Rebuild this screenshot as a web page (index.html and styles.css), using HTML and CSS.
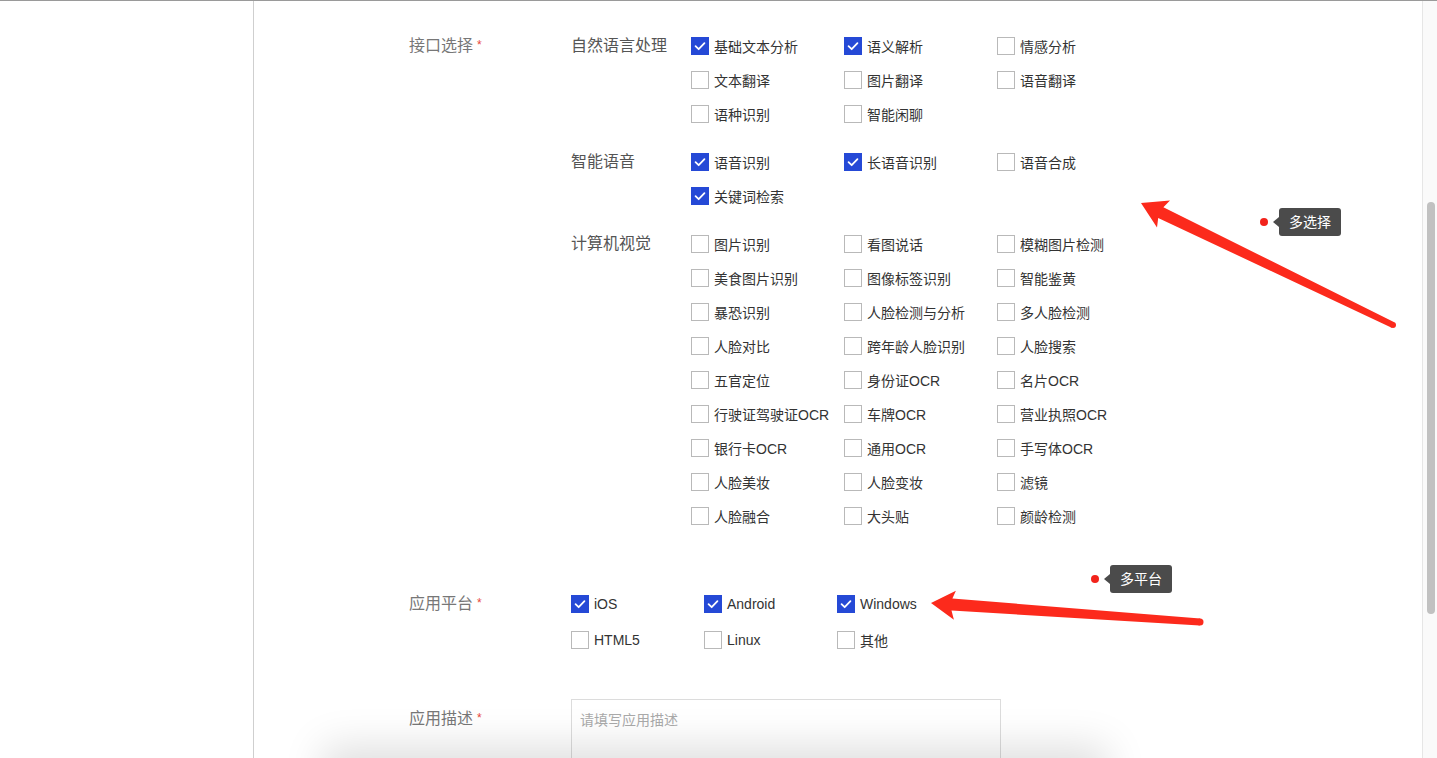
FILE: index.html
```html
<!DOCTYPE html>
<html lang="zh-CN">
<head>
<meta charset="utf-8">
<title>应用创建</title>
<link rel="stylesheet" href="styles.css">
</head>
<body>
<div class="frame">
  <div class="leftspace"></div>
  <main class="panel">
    <div class="field">
      <div class="field-label">接口选择<span class="star">*</span></div>
      <div class="field-body">
        <div class="cat">
          <div class="cat-name">自然语言处理</div>
          <div class="opts">
            <label class="opt"><span class="box on"><svg viewBox="0 0 18 18"><path d="M4 9.2 L7.5 12.6 L14 5.8"/></svg></span>基础文本分析</label>
            <label class="opt"><span class="box on"><svg viewBox="0 0 18 18"><path d="M4 9.2 L7.5 12.6 L14 5.8"/></svg></span>语义解析</label>
            <label class="opt"><span class="box"></span>情感分析</label>
            <label class="opt"><span class="box"></span>文本翻译</label>
            <label class="opt"><span class="box"></span>图片翻译</label>
            <label class="opt"><span class="box"></span>语音翻译</label>
            <label class="opt"><span class="box"></span>语种识别</label>
            <label class="opt"><span class="box"></span>智能闲聊</label>
          </div>
        </div>
        <div class="cat">
          <div class="cat-name">智能语音</div>
          <div class="opts">
            <label class="opt"><span class="box on"><svg viewBox="0 0 18 18"><path d="M4 9.2 L7.5 12.6 L14 5.8"/></svg></span>语音识别</label>
            <label class="opt"><span class="box on"><svg viewBox="0 0 18 18"><path d="M4 9.2 L7.5 12.6 L14 5.8"/></svg></span>长语音识别</label>
            <label class="opt"><span class="box"></span>语音合成</label>
            <label class="opt"><span class="box on"><svg viewBox="0 0 18 18"><path d="M4 9.2 L7.5 12.6 L14 5.8"/></svg></span>关键词检索</label>
          </div>
        </div>
        <div class="cat">
          <div class="cat-name">计算机视觉</div>
          <div class="opts">
            <label class="opt"><span class="box"></span>图片识别</label>
            <label class="opt"><span class="box"></span>看图说话</label>
            <label class="opt"><span class="box"></span>模糊图片检测</label>
            <label class="opt"><span class="box"></span>美食图片识别</label>
            <label class="opt"><span class="box"></span>图像标签识别</label>
            <label class="opt"><span class="box"></span>智能鉴黄</label>
            <label class="opt"><span class="box"></span>暴恐识别</label>
            <label class="opt"><span class="box"></span>人脸检测与分析</label>
            <label class="opt"><span class="box"></span>多人脸检测</label>
            <label class="opt"><span class="box"></span>人脸对比</label>
            <label class="opt"><span class="box"></span>跨年龄人脸识别</label>
            <label class="opt"><span class="box"></span>人脸搜索</label>
            <label class="opt"><span class="box"></span>五官定位</label>
            <label class="opt"><span class="box"></span>身份证OCR</label>
            <label class="opt"><span class="box"></span>名片OCR</label>
            <label class="opt"><span class="box"></span>行驶证驾驶证OCR</label>
            <label class="opt"><span class="box"></span>车牌OCR</label>
            <label class="opt"><span class="box"></span>营业执照OCR</label>
            <label class="opt"><span class="box"></span>银行卡OCR</label>
            <label class="opt"><span class="box"></span>通用OCR</label>
            <label class="opt"><span class="box"></span>手写体OCR</label>
            <label class="opt"><span class="box"></span>人脸美妆</label>
            <label class="opt"><span class="box"></span>人脸变妆</label>
            <label class="opt"><span class="box"></span>滤镜</label>
            <label class="opt"><span class="box"></span>人脸融合</label>
            <label class="opt"><span class="box"></span>大头贴</label>
            <label class="opt"><span class="box"></span>颜龄检测</label>
          </div>
        </div>
      </div>
    </div>

    <div class="field platform">
      <div class="field-label">应用平台<span class="star">*</span></div>
      <div class="popts">
        <label class="popt"><span class="box on"><svg viewBox="0 0 18 18"><path d="M4 9.2 L7.5 12.6 L14 5.8"/></svg></span>iOS</label>
        <label class="popt"><span class="box on"><svg viewBox="0 0 18 18"><path d="M4 9.2 L7.5 12.6 L14 5.8"/></svg></span>Android</label>
        <label class="popt"><span class="box on"><svg viewBox="0 0 18 18"><path d="M4 9.2 L7.5 12.6 L14 5.8"/></svg></span>Windows</label>
        <label class="popt"><span class="box"></span>HTML5</label>
        <label class="popt"><span class="box"></span>Linux</label>
        <label class="popt"><span class="box"></span>其他</label>
      </div>
    </div>

    <div class="field desc">
      <div class="field-label">应用描述<span class="star">*</span></div>
      <textarea class="textarea" placeholder="请填写应用描述"></textarea>
    </div>
  </main>
  <div class="scroll"><div class="thumb"></div></div>
</div>

<div class="bottom-shadow"></div>

<svg class="arrows" viewBox="0 0 1437 758" width="1437" height="758">
  <polygon points="1141,203 1170,200.4 1163.4,207.2 1394.3,322.3 1391.7,327.7 1158.2,218 1157,227.4"/>
  <circle cx="1393" cy="325" r="3"/>
  <polygon points="931,603 955.9,590.7 952.4,598.5 1200.2,618.5 1199.8,625.5 951.5,610.5 953.9,619.7"/>
  <circle cx="1200" cy="622" r="3.5"/>
</svg>

<div class="note note-multi"><span class="dot"></span><span class="tip">多选择</span></div>
<div class="note note-platform"><span class="dot"></span><span class="tip">多平台</span></div>
</body>
</html>
```
FILE: styles.css
```css
* { box-sizing: border-box; }
html, body {
  margin: 0;
  padding: 0;
  height: 758px;
  overflow: hidden;
  background: #fff;
  font-family: "Liberation Sans", "Noto Sans CJK SC", sans-serif;
  color: #333;
}
.frame {
  display: flex;
  height: 758px;
  overflow: hidden;
  border-top: 1px solid #9a9a9a;
}
.leftspace { width: 253px; flex: none; }
.panel {
  width: 1170px;
  flex: none;
  border-left: 1px solid #cfcfcf;
  border-right: 1px solid #e6e6e6;
  padding-top: 28px;
}
.field { display: flex; }
.field-label {
  width: 162px;
  margin-left: 155px;
  flex: none;
  font-size: 16px;
  line-height: 34px;
  color: #777;
}
.star {
  color: #e8473a;
  font-size: 12px;
  margin-left: 4px;
  position: relative;
  top: -2px;
}
.cat { display: flex; }
.cat + .cat { margin-top: 14px; }
.cat-name {
  width: 120px;
  flex: none;
  font-size: 16px;
  line-height: 34px;
  color: #555;
}
.opts {
  display: grid;
  grid-template-columns: repeat(3, 153px);
  grid-auto-rows: 34px;
}
.opt, .popt {
  display: flex;
  align-items: center;
  font-size: 14px;
  color: #333;
  white-space: nowrap;
}
.box {
  width: 18px;
  height: 18px;
  flex: none;
  border: 1px solid #b9b9b9;
  background: #fff;
  margin-right: 5px;
  display: flex;
}
.box.on {
  background: #2549d6;
  border-color: #2549d6;
}
.box svg {
  width: 16px;
  height: 16px;
}
.box svg path {
  fill: none;
  stroke: #fff;
  stroke-width: 2;
  stroke-linecap: round;
  stroke-linejoin: round;
}
.platform { margin-top: 53px; }
.platform .field-label { line-height: 36px; }
.popts {
  display: grid;
  grid-template-columns: repeat(3, 133px);
  grid-auto-rows: 36px;
}
.desc { margin-top: 41px; }
.desc .field-label { line-height: 39px; }
.textarea {
  width: 430px;
  height: 110px;
  border: 1px solid #dcdcdc;
  padding: 10px 8px;
  font-family: "Liberation Sans", "Noto Sans CJK SC", sans-serif;
  font-size: 14px;
  line-height: 20px;
  resize: none;
  outline: none;
  color: #333;
}
.textarea::placeholder { color: #aaa; }
.scroll {
  width: 14px;
  flex: none;
  background: #fafafa;
  padding-top: 201px;
  padding-left: 4px;
}
.thumb {
  width: 8px;
  height: 412px;
  background: #c1c1c1;
  border-radius: 4px;
}
.bottom-shadow {
  position: fixed;
  left: 335px;
  width: 760px;
  bottom: -60px;
  height: 60px;
  background: #fff;
  box-shadow: 0 0 40px 12px rgba(0, 0, 0, 0.13);
}
.arrows {
  position: absolute;
  left: 0;
  top: 0;
  pointer-events: none;
}
.arrows polygon, .arrows circle {
  fill: #fc2a1c;
}
.note {
  position: absolute;
  display: flex;
  align-items: center;
}
.note-multi { left: 1260px; top: 208px; }
.note-platform { left: 1091px; top: 565px; }
.dot {
  width: 8px;
  height: 8px;
  border-radius: 50%;
  background: #f2231b;
  margin-right: 11px;
}
.tip {
  position: relative;
  height: 28px;
  width: 62px;
  background: #4b4b4b;
  color: #fff;
  border-radius: 3px;
  font-size: 14px;
  line-height: 28px;
  text-align: center;
}
.tip::before {
  content: "";
  position: absolute;
  left: -6px;
  top: 9px;
  border-top: 5px solid transparent;
  border-bottom: 5px solid transparent;
  border-right: 6px solid #4b4b4b;
}
```
